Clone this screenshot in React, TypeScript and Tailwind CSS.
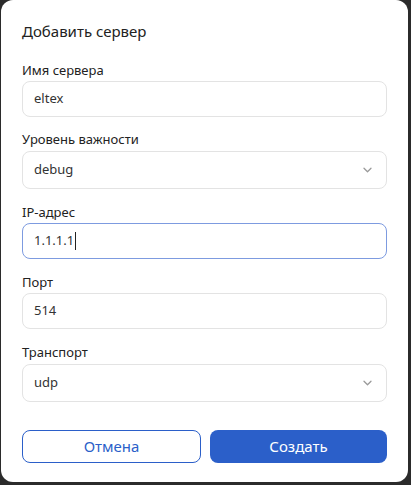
import React from 'react';

interface FieldProps {
    label: string;
    value: string;
    select?: boolean;
    focused?: boolean;
    className?: string;
}

const Chevron = () => (
    <svg width="9" height="6" viewBox="0 0 9 6" fill="none" className="mr-[2px] text-[#9a9a9a]">
        <path d="M1 1.2l3.5 3.5L8 1.2" stroke="currentColor" strokeWidth="1.3" strokeLinecap="round" strokeLinejoin="round" />
    </svg>
);

const Field: React.FC<FieldProps> = ({ label, value, select = false, focused = false, className = '' }) => {
    const border = focused ? 'border-[#7d9be0]' : 'border-[#e3e3e3]';
    return (
        <div className={`flex flex-col ${className}`}>
            <div className="h-[20px] text-[13px] leading-[20px] text-[#222]">{label}</div>
            <div
                className={`flex items-center justify-between rounded-lg border bg-white pl-[11px] pr-[12px] text-[13px] text-[#333] ${border} ${
                    select ? 'mt-[2px] h-[38px]' : 'mt-[1px] h-[36px]'
                }`}
            >
                <span className="flex items-center">
                    {value}
                    {focused && <span className="ml-[1px] inline-block h-[18px] w-px bg-[#222]" />}
                </span>
                {select && <Chevron />}
            </div>
        </div>
    );
};

export default function App() {
    return (
        <div className="h-[485px] w-[411px] bg-[#2b2b2b] font-['Noto_Sans',sans-serif]">
            <div className="ml-px h-[482px] w-[407px] rounded-[12px] bg-white px-[21px] pt-[19px]">
                <h2 className="h-[24px] text-[15px] leading-[24px] text-[#222]">Добавить сервер</h2>

                <Field className="mt-[17px]" label="Имя сервера" value="eltex" />
                <Field className="mt-[12px]" label="Уровень важности" value="debug" select />
                <Field className="mt-[13px]" label="IP-адрес" value="1.1.1.1" focused />
                <Field className="mt-[13px]" label="Порт" value="514" />
                <Field className="mt-[13px]" label="Транспорт" value="udp" select />

                <div className="mt-[28px] flex gap-[9px]">
                    <button className="h-[33px] flex-1 rounded-lg border border-[#2b5fc9] bg-white text-[15px] text-[#2b5fc9]">
                        Отмена
                    </button>
                    <button className="h-[33px] flex-1 rounded-lg bg-[#2b5fc9] text-[15px] text-white">
                        Создать
                    </button>
                </div>
            </div>
        </div>
    );
}
